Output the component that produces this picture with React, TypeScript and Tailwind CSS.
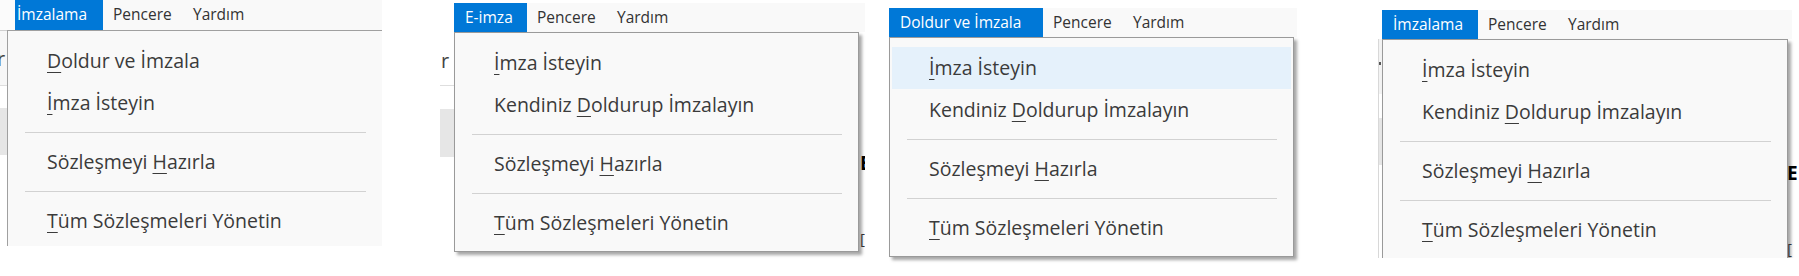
import React from "react";

type ItemDef = { label: React.ReactNode; hover?: boolean } | "sep";

const U = ({ children }: { children: React.ReactNode }) => (
  <span className="underline decoration-1 underline-offset-[4px]">{children}</span>
);

const itemsA: ItemDef[] = [
  { label: (<><U>D</U>oldur ve İmzala</>) },
  { label: (<><U>İ</U>mza İsteyin</>) },
  "sep",
  { label: (<>Sözleşmeyi <U>H</U>azırla</>) },
  "sep",
  { label: (<><U>T</U>üm Sözleşmeleri Yönetin</>) },
];

const itemsB = (hoverFirst: boolean): ItemDef[] => [
  { label: (<><U>İ</U>mza İsteyin</>), hover: hoverFirst },
  { label: (<>Kendiniz <U>D</U>oldurup İmzalayın</>) },
  "sep",
  { label: (<>Sözleşmeyi <U>H</U>azırla</>) },
  "sep",
  { label: (<><U>T</U>üm Sözleşmeleri Yönetin</>) },
];

function Items({ items }: { items: ItemDef[] }) {
  return (
    <div className="flex flex-col px-[2px] pt-[9px] pb-[7px]">
      {items.map((it, i) =>
        it === "sep" ? (
          <div key={i} className="h-[17px] flex items-center ml-[15px] mr-[14px]">
            <div className="h-px w-full bg-[#d2d2d2]" />
          </div>
        ) : (
          <div
            key={i}
            className={
              it.hover
                ? "h-[42px] flex items-center pl-[37px] text-[19.5px] text-[#3b3b3b] whitespace-nowrap bg-[#e5f1fb]"
                : "h-[42px] flex items-center pl-[37px] text-[19.5px] text-[#3b3b3b] whitespace-nowrap"
            }
          >
            <span>{it.label}</span>
          </div>
        )
      )}
    </div>
  );
}

function Bar({ label, tabClass, barClass }: { label: string; tabClass: string; barClass: string }) {
  return (
    <div className={`flex items-stretch h-[29px] bg-[#f9f9f9] text-[15.5px] whitespace-nowrap ${barClass}`}>
      <div className={`bg-[#0078d7] text-white flex items-center ${tabClass}`}>{label}</div>
      <div className="w-[79px] pl-[10px] flex items-center text-[#333]">Pencere</div>
      <div className="pl-[11px] flex items-center text-[#333]">Yardım</div>
    </div>
  );
}

export default function App() {
  return (
    <div className="w-[1799px] h-[276px] bg-white overflow-hidden flex items-start font-['Open_Sans',sans-serif]">
      {/* Panel 1 */}
      <div className="w-[382px] h-[246px] shrink-0 overflow-hidden flex flex-col">
        <div className="flex h-[30px] bg-[#f9f9f9]">
          <div className="w-[15px] bg-[#fbfbfb]" />
          <Bar label="İmzalama" tabClass="w-[88px] pl-[2px]" barClass="h-[30px] flex-1" />
        </div>
        <div className="flex flex-1">
          <div className="w-[7px] shrink-0 flex flex-col border-t border-[#cfcfcf]">
            <div className="h-[54px] bg-[#f7f7f7] overflow-hidden relative">
              <span className="block text-[20px] text-[#444] leading-none mt-[18px] -ml-[3px]">r</span>
            </div>
            <div className="h-px bg-[#dedede]" />
            <div className="h-[22px] bg-white" />
            <div className="h-[47px] bg-[#e6e6e6]" />
            <div className="flex-1 bg-white" />
          </div>
          <div className="w-[375px] shrink-0 bg-[#f9f9f9] border-l border-t border-[#a0a0a0]">
            <Items items={itemsA} />
          </div>
        </div>
      </div>

      {/* Panel 2 */}
      <div className="ml-[58px] mt-[3px] w-[425px] shrink-0 flex flex-col">
        <div className="flex">
          <div className="w-[14px] h-[29px] bg-white" />
          <Bar label="E-imza" tabClass="w-[73px] pl-[11px]" barClass="w-[411px]" />
        </div>
        <div className="flex">
          <div className="w-[14px] shrink-0 flex flex-col">
            <div className="h-[53px] overflow-hidden">
              <span className="block text-[20px] text-[#444] leading-none mt-[19px] ml-[1px]">r</span>
            </div>
            <div className="h-px bg-[#dedede]" />
            <div className="h-[23px] bg-white" />
            <div className="h-[48px] bg-[#e6e6e6]" />
          </div>
          <div className="w-[405px] h-[220px] shrink-0 bg-[#f9f9f9] border border-[#9a9a9a] shadow-[3px_3px_3px_rgba(0,0,0,0.35)]">
            <Items items={itemsB(false)} />
          </div>
          <div className="w-[6px] shrink-0 flex flex-col overflow-hidden">
            <div className="h-[122px]" />
            <span className="block text-[19px] font-bold text-black leading-none ml-[1px]">E</span>
            <div className="h-[58px]" />
            <span className="block text-[15px] text-[#333] leading-none ml-[1px]">[</span>
          </div>
        </div>
      </div>

      {/* Panel 3 */}
      <div className="ml-[24px] mt-[8px] w-[408px] shrink-0 flex flex-col">
        <Bar label="Doldur ve İmzala" tabClass="w-[154px] pl-[11px]" barClass="w-[408px]" />
        <div className="w-[405px] h-[220px] bg-[#f9f9f9] border border-[#9a9a9a] shadow-[3px_3px_3px_rgba(0,0,0,0.35)]">
          <Items items={itemsB(true)} />
        </div>
      </div>

      {/* Panel 4 */}
      <div className="ml-[81px] mt-[10px] w-[421px] h-[248px] shrink-0 flex flex-col overflow-hidden">
        <div className="flex">
          <div className="w-[4px] h-[29px] bg-white" />
          <Bar label="İmzalama" tabClass="w-[96px] pl-[11px]" barClass="w-[410px]" />
        </div>
        <div className="flex flex-1">
          <div className="w-[4px] shrink-0 flex flex-col border-l border-[#d8d8d8]">
            <div className="h-[55px] bg-[#f3f3f3] flex flex-col">
              <div className="h-[23px]" />
              <div className="h-[3px] w-[2px] bg-[#555]" />
            </div>
            <div className="h-[24px] bg-white" />
            <div className="h-[47px] bg-[#e6e6e6]" />
          </div>
          <div className="w-[406px] h-[222px] shrink-0 bg-[#f9f9f9] border-l border-t border-r border-[#9a9a9a] shadow-[3px_3px_3px_rgba(0,0,0,0.35)]">
            <Items items={itemsB(false)} />
          </div>
          <div className="w-[11px] shrink-0 flex flex-col overflow-hidden">
            <div className="h-[125px]" />
            <span className="block text-[19px] font-bold text-black leading-none -ml-[1px]">E</span>
            <div className="h-[58px]" />
            <span className="block text-[15px] text-[#333] leading-none -ml-[1px]">[</span>
          </div>
        </div>
      </div>
    </div>
  );
}
